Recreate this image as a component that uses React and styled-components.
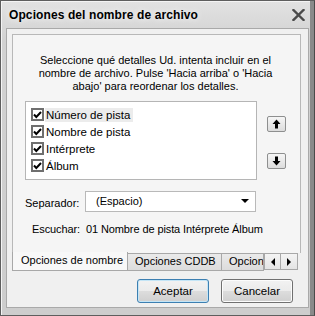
import React from "react";
import styled, { createGlobalStyle } from "styled-components";

const GlobalStyle = createGlobalStyle`
  html, body {
    margin: 0;
    padding: 0;
    background: #ffffff;
  }
  body {
    font-family: "Liberation Sans", Arial, sans-serif;
    font-size: 11px;
    color: #000;
  }
`;

const Window = styled.div`
  box-sizing: border-box;
  width: 315px;
  height: 316px;
  border: 1px solid #5e5e5e;
  border-right-color: #4a4a4a;
  background: linear-gradient(#e2e2e2, #d2d2d2 40px, #cdcdcd);
  display: flex;
  flex-direction: column;
  box-shadow: inset -4px 0 0 #8a8a8a, inset 1px 1px 0 #f4f4f4;
`;

const TitleBar = styled.div`
  height: 27px;
  display: flex;
  align-items: center;
  justify-content: space-between;
  padding: 0 9px 0 8px;
  flex: none;
`;

const Title = styled.span`
  font-weight: bold;
  font-size: 12px;
  color: #000;
  text-shadow: 0 0 6px #ffffff;
  letter-spacing: 0.1px;
`;

const Client = styled.div`
  flex: 1;
  margin: 0 5px 7px 5px;
  background: #f0f0f0;
  border: 1px solid #a9a9a9;
  display: flex;
  flex-direction: column;
  padding: 5px 7px 0 5px;
`;

const Panel = styled.div`
  box-sizing: border-box;
  height: 219px;
  background: #f5f5f5;
  border: 1px solid #b8b8b8;
  border-bottom: none;
  padding: 19px 12px 0 12px;
  display: flex;
  flex-direction: column;
`;

const Intro = styled.p`
  margin: 0;
  text-align: center;
  line-height: 13px;
  padding-right: 2px;
`;

const ListRow = styled.div`
  display: flex;
  margin-top: 8px;
  align-items: flex-start;
`;

const ListBox = styled.div`
  box-sizing: border-box;
  width: 232px;
  height: 79px;
  background: #fff;
  border: 1px solid #b5b5b5;
  padding: 4px 0 0 5px;
`;

const Item = styled.div`
  display: flex;
  align-items: center;
  height: 17px;
`;

const Check = styled.span`
  box-sizing: border-box;
  width: 13px;
  height: 13px;
  border: 2px solid #6f6f6f;
  background: #fff;
  display: flex;
  align-items: center;
  justify-content: center;
  margin-right: 1px;
`;

const ItemLabel = styled.span`
  padding: 1px 3px 1px 1px;
  background: ${(p) => (p.$active ? "#ececec" : "transparent")};
  font-size: 11.5px;
`;

const MoveButtons = styled.div`
  display: flex;
  flex-direction: column;
  gap: 21px;
  margin: 15px 0 0 10px;
`;

const SmallButton = styled.button`
  box-sizing: border-box;
  width: 19px;
  height: 16px;
  padding: 0;
  border: 1px solid #8e8f8f;
  border-radius: 2px;
  background: linear-gradient(#f6f6f6, #dcdcdc);
  display: flex;
  align-items: center;
  justify-content: center;
`;

const SepRow = styled.div`
  display: flex;
  align-items: center;
  margin-top: 11px;
`;

const Label = styled.span`
  width: 60px;
  padding-top: 3px;
`;

const Combo = styled.div`
  box-sizing: border-box;
  width: 171px;
  height: 21px;
  background: #fff;
  border: 1px solid #b9b9b9;
  display: flex;
  align-items: center;
  justify-content: space-between;
  padding: 0 6px 2px 10px;
`;

const Preview = styled.div`
  margin: 11px 0 0 7px;
  white-space: nowrap;
  letter-spacing: -0.1px;
`;

const TabStrip = styled.div`
  display: flex;
  height: 18px;
  flex: none;
`;

const Tab = styled.div`
  box-sizing: border-box;
  height: ${(p) => (p.$active ? "19px" : "18px")};
  margin-top: ${(p) => (p.$active ? "-1px" : "0")};
  width: ${(p) => p.$w}px;
  border: 1px solid #a8a8a8;
  border-top: ${(p) => (p.$active ? "none" : "1px solid #a8a8a8")};
  border-left: ${(p) => (p.$first ? "1px solid #a8a8a8" : "none")};
  background: ${(p) => (p.$active ? "#f8f8f8" : "linear-gradient(#eaeaea, #dcdcdc)")};
  padding: ${(p) => (p.$active ? "2px 0 0 8px" : "1px 0 0 7px")};
  white-space: nowrap;
  overflow: hidden;
  flex: none;
`;

const ScrollBtn = styled.div`
  box-sizing: border-box;
  width: 17px;
  height: 17px;
  border: 1px solid #a8a8a8;
  border-left: ${(p) => (p.$first ? "1px solid #a8a8a8" : "none")};
  background: linear-gradient(#f4f4f4, #e4e4e4);
  display: flex;
  align-items: center;
  justify-content: center;
  flex: none;
`;

const Footer = styled.div`
  display: flex;
  justify-content: flex-end;
  gap: 12px;
  padding: 8px 8px 0 0;
`;

const DlgButton = styled.button`
  box-sizing: border-box;
  width: 72px;
  height: 24px;
  border: 1px solid ${(p) => (p.$default ? "#3c7fb1" : "#707070")};
  border-radius: 3px;
  background: linear-gradient(#f2f2f2 0%, #ebebeb 49%, #dddddd 50%, #cfcfcf 100%);
  box-shadow: inset 0 0 0 1px ${(p) => (p.$default ? "#c4e5f6" : "#fcfcfc")};
  font-family: "Liberation Sans", Arial, sans-serif;
  font-size: 11.5px;
  color: #000;
  padding: 0;
`;

const CheckMark = () => (
  <svg width="9" height="8" viewBox="0 0 9 8">
    <path d="M1 3.5 L3.3 6 L8 1" fill="none" stroke="#000" strokeWidth="2" />
  </svg>
);

const Arrow = ({ down }) => (
  <svg width="9" height="10" viewBox="0 0 9 10" style={down ? { transform: "rotate(180deg)" } : undefined}>
    <path d="M4.5 0.5 L8.5 5 L6 5 L6 9.5 L3 9.5 L3 5 L0.5 5 Z" fill="#000" />
  </svg>
);

const Tri = ({ dir }) => {
  const d =
    dir === "down"
      ? "M0 0 L8 0 L4 4 Z"
      : dir === "left"
      ? "M4 0 L4 8 L0 4 Z"
      : "M0 0 L4 4 L0 8 Z";
  const w = dir === "down" ? 8 : 4;
  const h = dir === "down" ? 4 : 8;
  return (
    <svg width={w} height={h} viewBox={`0 0 ${w} ${h}`}>
      <path d={d} fill="#000" />
    </svg>
  );
};

const CloseIcon = () => (
  <svg width="13" height="12" viewBox="0 0 13 12">
    <path d="M1.5 1 L11.5 11 M11.5 1 L1.5 11" stroke="#4a4a4a" strokeWidth="2.4" strokeLinecap="square" />
  </svg>
);

const items = ["Número de pista", "Nombre de pista", "Intérprete", "Álbum"];

export default function App() {
  return (
    <>
      <GlobalStyle />
      <Window>
        <TitleBar>
          <Title>Opciones del nombre de archivo</Title>
          <CloseIcon />
        </TitleBar>
        <Client>
          <Panel>
            <Intro>
              Seleccione qué detalles Ud. intenta incluir en el
              <br />
              nombre de archivo. Pulse 'Hacia arriba' o 'Hacia
              <br />
              abajo' para reordenar los detalles.
            </Intro>
            <ListRow>
              <ListBox>
                {items.map((it, i) => (
                  <Item key={it}>
                    <Check>
                      <CheckMark />
                    </Check>
                    <ItemLabel $active={i === 0}>{it}</ItemLabel>
                  </Item>
                ))}
              </ListBox>
              <MoveButtons>
                <SmallButton>
                  <Arrow />
                </SmallButton>
                <SmallButton>
                  <Arrow down />
                </SmallButton>
              </MoveButtons>
            </ListRow>
            <SepRow>
              <Label>Separador:</Label>
              <Combo>
                <span>(Espacio)</span>
                <Tri dir="down" />
              </Combo>
            </SepRow>
            <Preview>Escuchar:&nbsp; 01 Nombre de pista Intérprete Álbum</Preview>
          </Panel>
          <TabStrip>
            <Tab $active $first $w={116}>
              Opciones de nombre
            </Tab>
            <Tab $w={94}>Opciones CDDB</Tab>
            <Tab $w={42}>Opciones</Tab>
            <ScrollBtn $first>
              <Tri dir="left" />
            </ScrollBtn>
            <ScrollBtn>
              <Tri dir="right" />
            </ScrollBtn>
          </TabStrip>
          <Footer>
            <DlgButton $default>Aceptar</DlgButton>
            <DlgButton>Cancelar</DlgButton>
          </Footer>
        </Client>
      </Window>
    </>
  );
}
